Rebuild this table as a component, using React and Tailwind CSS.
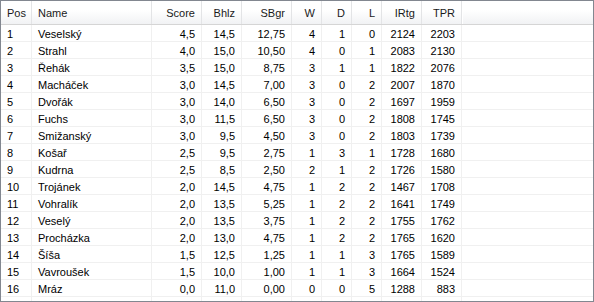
import React from 'react';

const columns = [
  { label: 'Pos', w: 'w-[31px]', align: 'left' },
  { label: 'Name', w: 'w-[120px]', align: 'left' },
  { label: 'Score', w: 'w-[50px]', align: 'right' },
  { label: 'Bhlz', w: 'w-[40px]', align: 'right' },
  { label: 'SBgr', w: 'w-[50px]', align: 'right' },
  { label: 'W', w: 'w-[30px]', align: 'right' },
  { label: 'D', w: 'w-[30px]', align: 'right' },
  { label: 'L', w: 'w-[30px]', align: 'right' },
  { label: 'IRtg', w: 'w-[40px]', align: 'right' },
  { label: 'TPR', w: 'w-[40px]', align: 'right' },
];

const rows = [
  ['1', 'Veselský', '4,5', '14,5', '12,75', '4', '1', '0', '2124', '2203'],
  ['2', 'Strahl', '4,0', '15,0', '10,50', '4', '0', '1', '2083', '2130'],
  ['3', 'Řehák', '3,5', '15,0', '8,75', '3', '1', '1', '1822', '2076'],
  ['4', 'Macháček', '3,0', '14,5', '7,00', '3', '0', '2', '2007', '1870'],
  ['5', 'Dvořák', '3,0', '14,0', '6,50', '3', '0', '2', '1697', '1959'],
  ['6', 'Fuchs', '3,0', '11,5', '6,50', '3', '0', '2', '1808', '1745'],
  ['7', 'Smižanský', '3,0', '9,5', '4,50', '3', '0', '2', '1803', '1739'],
  ['8', 'Košař', '2,5', '9,5', '2,75', '1', '3', '1', '1728', '1680'],
  ['9', 'Kudrna', '2,5', '8,5', '2,50', '2', '1', '2', '1726', '1580'],
  ['10', 'Trojánek', '2,0', '14,5', '4,75', '1', '2', '2', '1467', '1708'],
  ['11', 'Vohralík', '2,0', '13,5', '5,25', '1', '2', '2', '1641', '1749'],
  ['12', 'Veselý', '2,0', '13,5', '3,75', '1', '2', '2', '1755', '1762'],
  ['13', 'Procházka', '2,0', '13,0', '4,75', '1', '2', '2', '1765', '1620'],
  ['14', 'Šíša', '1,5', '12,5', '1,25', '1', '1', '3', '1765', '1589'],
  ['15', 'Vavroušek', '1,5', '10,0', '1,00', '1', '1', '3', '1664', '1524'],
  ['16', 'Mráz', '0,0', '11,0', '0,00', '0', '0', '5', '1288', '883'],
];

const Standings = () => {
  return (
    <div className="w-[594px] h-[302px] bg-white border border-[#828790] overflow-hidden flex flex-col text-[11px] text-black [font-family:'Liberation_Sans',Arial,sans-serif]">
      {/* header */}
      <div className="flex h-[24px] shrink-0 border-b border-[#d5d5d5] bg-gradient-to-b from-white from-40% to-[#f1f2f4] text-[#1a1a1a]">
        {columns.map((c) => (
          <div
            key={c.label}
            className={`${c.w} shrink-0 h-full flex items-center pt-[2px] px-[6px] border-r border-[#e3e4e6] ${c.align === 'right' ? 'justify-end' : 'justify-start'}`}
          >
            {c.label}
          </div>
        ))}
        <div className="flex-1 border-l border-white" />
      </div>

      {/* rows */}
      {rows.map((r) => (
        <div key={r[0]} className="flex h-[17px] shrink-0 border-b border-[#f0f0f0]">
          {r.map((v, i) => (
            <div
              key={i}
              className={`${columns[i].w} shrink-0 h-full flex items-center pt-[2px] px-[6px] border-r border-[#f0f0f0] whitespace-nowrap ${columns[i].align === 'right' ? 'justify-end' : 'justify-start'}`}
            >
              {v}
            </div>
          ))}
        </div>
      ))}

      {/* empty space below the last row keeps the column lines */}
      <div className="flex flex-1">
        {columns.map((c) => (
          <div key={c.label} className={`${c.w} shrink-0 border-r border-[#f0f0f0]`} />
        ))}
      </div>
    </div>
  );
};

export default function App() {
  return <Standings />;
}
